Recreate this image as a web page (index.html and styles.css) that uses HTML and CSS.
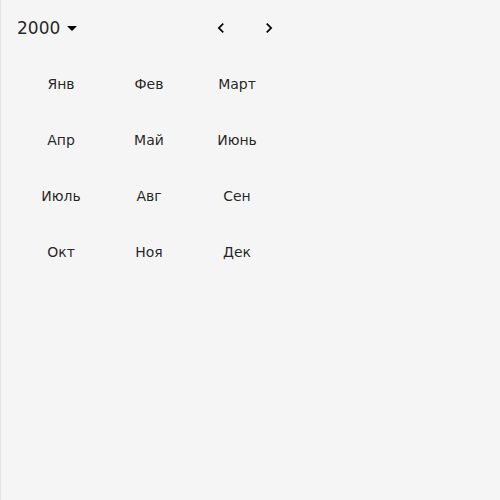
FILE: index.html
```html
<!DOCTYPE html>
<html lang="ru">
<head>
<meta charset="utf-8">
<link rel="stylesheet" href="styles.css">
</head>
<body>
<div class="calendar">
  <div class="header">
    <div class="year">
      <span class="year-label">2000</span>
      <svg class="drop" viewBox="0 0 24 24" width="24" height="24"><path d="M7 10l5 5 5-5z"/></svg>
    </div>
    <div class="arrows">
      <button class="arrow"><svg viewBox="0 0 24 24" width="20" height="20"><path d="M15.41 16.59 10.83 12l4.58-4.59L14 6l-6 6 6 6 1.41-1.41z"/></svg></button>
      <button class="arrow"><svg viewBox="0 0 24 24" width="20" height="20"><path d="M8.59 16.59 13.17 12 8.59 7.41 10 6l6 6-6 6-1.41-1.41z"/></svg></button>
    </div>
  </div>
  <div class="months">
    <div class="month">Янв</div>
    <div class="month">Фев</div>
    <div class="month">Март</div>
    <div class="month">Апр</div>
    <div class="month">Май</div>
    <div class="month">Июнь</div>
    <div class="month">Июль</div>
    <div class="month">Авг</div>
    <div class="month">Сен</div>
    <div class="month">Окт</div>
    <div class="month">Ноя</div>
    <div class="month">Дек</div>
  </div>
</div>
</body>
</html>
```
FILE: styles.css
```css
html, body {
  margin: 0;
  padding: 0;
  height: 100%;
}
body {
  background: #f5f5f5;
  border-left: 1px solid #e4e4e4;
  box-sizing: border-box;
  font-family: "DejaVu Sans", sans-serif;
  color: rgba(0, 0, 0, 0.87);
}
.calendar {
  width: 264px;
  padding: 0 16px;
}
.header {
  height: 56px;
  display: flex;
  align-items: center;
  justify-content: space-between;
}
.year {
  display: flex;
  align-items: center;
}
.year-label {
  font-size: 17px;
  line-height: 24px;
}
.drop {
  fill: #000;
}
.arrows {
  display: flex;
  align-items: center;
  gap: 28px;
  margin-right: 2px;
}
.arrow {
  width: 20px;
  height: 20px;
  padding: 0;
  border: 0;
  background: none;
  display: flex;
  align-items: center;
  justify-content: center;
}
.arrow svg {
  fill: #000;
}
.months {
  display: grid;
  grid-template-columns: repeat(3, 88px);
  grid-auto-rows: 56px;
}
.month {
  display: flex;
  align-items: center;
  justify-content: center;
  font-size: 14px;
}
```
